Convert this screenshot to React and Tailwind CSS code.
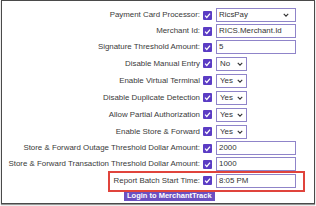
import React from "react";

const Check = () => (
  <span className="w-[9px] h-[9px] bg-[#5b3cc4] rounded-[1px] flex items-center justify-center shrink-0">
    <svg width="7" height="7" viewBox="0 0 10 10">
      <path d="M1.5 5.2 L4 7.8 L8.6 2.2" stroke="white" strokeWidth="1.8" fill="none" />
    </svg>
  </span>
);

const Chevron = () => (
  <svg width="6" height="4" viewBox="0 0 8 5" className="shrink-0">
    <path d="M1 1 L4 4 L7 1" stroke="#333" strokeWidth="1.5" fill="none" />
  </svg>
);

function Control({ type, value }) {
  if (type === "input")
    return (
      <div className="w-[80px] h-[14px] border border-[#8f84c9] bg-white flex items-center px-[2px] text-[#333]">
        {value}
      </div>
    );
  if (type === "select")
    return (
      <div className="w-[80px] h-[14px] border border-[#8f84c9] bg-white flex items-center justify-between pl-[2px] pr-[6px] text-[#333]">
        <span>{value}</span>
        <Chevron />
      </div>
    );
  return (
    <div className="w-[31px] h-[14px] border border-[#8f84c9] bg-white flex items-center justify-between pl-[3px] pr-[3px] text-[#333]">
      <span>{value}</span>
      <Chevron />
    </div>
  );
}

const rows = [
  ["Payment Card Processor:", "select", "RicsPay", "h-[16px]"],
  ["Merchant Id:", "input", "RICS.Merchant.Id", "h-[16px]"],
  ["Signature Threshold Amount:", "input", "5", "h-[16px]"],
  ["Disable Manual Entry", "small", "No", "h-[17px]"],
  ["Enable Virtual Terminal", "small", "Yes", "h-[17px]"],
  ["Disable Duplicate Detection", "small", "Yes", "h-[17px]"],
  ["Allow Partial Authorization", "small", "Yes", "h-[17px]"],
  ["Enable Store & Forward", "small", "Yes", "h-[17px]"],
  ["Store & Forward Outage Threshold Dollar Amount:", "input", "2000", "h-[16px]"],
  ["Store & Forward Transaction Threshold Dollar Amount:", "input", "1000", "h-[16px]"],
  ["Report Batch Start Time:", "input", "8:05 PM", "h-[17px]"],
];

export default function App() {
  return (
    <div className="w-[316px] h-[206px] bg-white" style={{ fontFamily: "'Liberation Sans', Arial, sans-serif" }}>
      <div className="relative ml-[1px] w-[314px] h-[204px] border border-[#4a4a4a] shadow-[0_1px_1px_#999] pt-[6px] text-[7.9px] leading-none text-[#3a3a3a]">
        {rows.map(([label, type, value, h]) => (
          <div key={label} className={`flex items-center ${h}`}>
            <div className="w-[201px] text-right pr-[3px] whitespace-nowrap">{label}</div>
            <Check />
            <div className="w-[4px]" />
            <Control type={type} value={value} />
          </div>
        ))}
        <div className="flex mt-[1px] pl-[122px]">
          <div className="h-[11px] px-[3px] bg-[#6c4fc0] text-white font-bold text-[7.5px] flex items-center">Login to MerchantTrack</div>
        </div>
        <div className="absolute left-[106px] top-[170px] w-[197px] h-[21px] border-2 border-[#e0443c]" />
      </div>
    </div>
  );
}
